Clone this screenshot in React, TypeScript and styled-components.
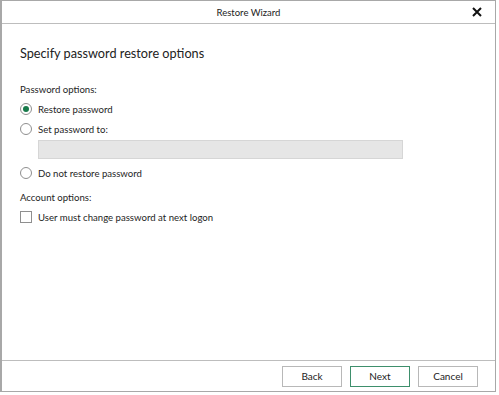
import React, { useState } from "react";
import styled, { createGlobalStyle } from "styled-components";

const GlobalStyle = createGlobalStyle`
  html, body {
    margin: 0;
    padding: 0;
    background: #ffffff;
  }
  body {
    font-family: "Lato", "Noto Sans", sans-serif;
    color: #1e1e1e;
  }
`;

const App = () => {
  const [passwordMode, setPasswordMode] = useState("restore");
  const [mustChange, setMustChange] = useState(false);

  return (
    <>
      <GlobalStyle />
      <Window>
        <TitleBar>
          <Title>Restore Wizard</Title>
          <CloseButton aria-label="Close">
            <svg width="10" height="10" viewBox="0 0 10 10">
              <path d="M1 1 L9 9 M9 1 L1 9" stroke="#111" strokeWidth="2" />
            </svg>
          </CloseButton>
        </TitleBar>
        <Body>
          <Heading>Specify password restore options</Heading>
          <Section>
            <GroupLabel>Password options:</GroupLabel>
            <Option onClick={() => setPasswordMode("restore")}>
              <Radio checked={passwordMode === "restore"} />
              Restore password
            </Option>
            <Option onClick={() => setPasswordMode("set")}>
              <Radio checked={passwordMode === "set"} />
              Set password to:
            </Option>
            <PasswordInput type="password" disabled={passwordMode !== "set"} />
            <Option onClick={() => setPasswordMode("none")}>
              <Radio checked={passwordMode === "none"} />
              Do not restore password
            </Option>
          </Section>
          <Section>
            <GroupLabel>Account options:</GroupLabel>
            <Option onClick={() => setMustChange(!mustChange)}>
              <Checkbox checked={mustChange} />
              User must change password at next logon
            </Option>
          </Section>
        </Body>
        <Footer>
          <Button>Back</Button>
          <Button primary>Next</Button>
          <Button>Cancel</Button>
        </Footer>
      </Window>
    </>
  );
};

const Window = styled.div`
  width: 496px;
  height: 392px;
  box-sizing: border-box;
  border: 1px solid #a8a8a8;
  border-left-width: 2px;
  display: flex;
  flex-direction: column;
  background: #ffffff;
`;

const TitleBar = styled.div`
  height: 22px;
  flex-shrink: 0;
  border-bottom: 1px solid #bdbdbd;
  display: flex;
  align-items: center;
  justify-content: center;
  position: relative;
`;

const Title = styled.div`
  font-size: 9.5px;
  color: #222;
`;

const CloseButton = styled.div`
  position: absolute;
  right: 13px;
  top: 6px;
  width: 10px;
  height: 10px;
  display: flex;
`;

const Body = styled.div`
  flex: 1;
  padding: 20px 0 0 18px;
  display: flex;
  flex-direction: column;
`;

const Heading = styled.div`
  font-size: 12.7px;
  line-height: 18px;
  color: #222;
  margin-bottom: 21px;
`;

const Section = styled.div`
  display: flex;
  flex-direction: column;
  margin-bottom: 8px;
`;

const GroupLabel = styled.div`
  font-size: 9.6px;
  line-height: 14px;
  margin-bottom: 2px;
`;

const Option = styled.label`
  display: flex;
  align-items: center;
  gap: 6px;
  font-size: 9.6px;
  height: 20px;
  cursor: pointer;
`;

const Radio = styled.span<{ checked?: boolean }>`
  width: 12px;
  height: 12px;
  box-sizing: border-box;
  border-radius: 50%;
  border: 1px solid #8f8f8f;
  display: flex;
  align-items: center;
  justify-content: center;

  &::after {
    content: "";
    width: 6px;
    height: 6px;
    border-radius: 50%;
    background: ${(props) => (props.checked ? "#177a4a" : "transparent")};
  }
`;

const Checkbox = styled.span<{ checked?: boolean }>`
  width: 12px;
  height: 12px;
  box-sizing: border-box;
  border: 1px solid #8f8f8f;
  background: ${(props) => (props.checked ? "#177a4a" : "#ffffff")};
`;

const PasswordInput = styled.input`
  margin: 1px 0 4px 18px;
  width: 365px;
  height: 19px;
  box-sizing: border-box;
  border: 1px solid #d6d6d6;
  background: #e6e6e6;
  outline: none;
`;

const Footer = styled.div`
  height: 30px;
  flex-shrink: 0;
  border-top: 1px solid #bdbdbd;
  display: flex;
  align-items: center;
  justify-content: flex-end;
  gap: 8px;
  padding-right: 17px;
`;

const Button = styled.button<{ primary?: boolean }>`
  width: 60px;
  height: 21px;
  box-sizing: border-box;
  background: #ffffff;
  border: 1px solid ${(props) => (props.primary ? "#3e8f6c" : "#b8b8b8")};
  font-family: "Lato", "Noto Sans", sans-serif;
  font-size: 10px;
  color: #222;
  padding: 0;
  cursor: pointer;
`;

export default App;
